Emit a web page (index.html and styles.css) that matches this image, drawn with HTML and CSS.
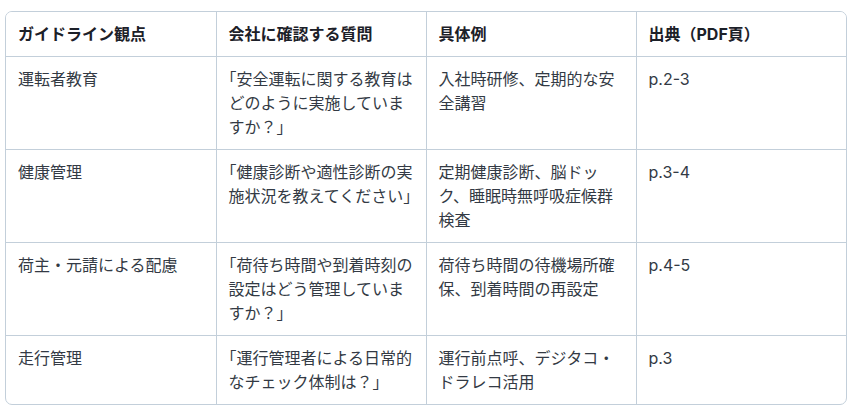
FILE: index.html
```html
<!DOCTYPE html>
<html lang="ja">
<head>
<meta charset="utf-8">
<link rel="stylesheet" href="styles.css">
</head>
<body>
<div class="wrap">
<table class="tbl">
<thead>
<tr><th>ガイドライン観点</th><th>会社に確認する質問</th><th>具体例</th><th>出典（PDF頁）</th></tr>
</thead>
<tbody>
<tr><td>運転者教育</td><td class="q">「安全運転に関する教育はどのように実施していますか？」</td><td>入社時研修、定期的な安全講習</td><td>p.2-3</td></tr>
<tr><td>健康管理</td><td class="q">「健康診断や適性診断の実施状況を教えてください」</td><td>定期健康診断、脳ドッ<br>ク、睡眠時無呼吸症候群検査</td><td>p.3-4</td></tr>
<tr><td>荷主・元請による配慮</td><td class="q">「荷待ち時間や到着時刻の設定はどう管理していますか？」</td><td>荷待ち時間の待機場所確保、到着時間の再設定</td><td>p.4-5</td></tr>
<tr><td>走行管理</td><td class="q">「運行管理者による日常的なチェック体制は？」</td><td>運行前点呼、デジタコ・ドラレコ活用</td><td>p.3</td></tr>
</tbody>
</table>
</div>
</body>
</html>
```
FILE: styles.css
```css
html, body {
  margin: 0;
  padding: 0;
  background: #ffffff;
}
body {
  font-family: "Inter", "Noto Sans CJK JP", sans-serif;
  font-size: 16px;
  line-height: 24px;
  color: #333a44;
}
.wrap {
  margin: 11px 0 0 5px;
  width: 840px;
  border: 1px solid #c3cfda;
  border-radius: 7px;
  overflow: hidden;
}
.tbl {
  width: 100%;
  border-collapse: collapse;
  table-layout: fixed;
}
.tbl th, .tbl td {
  padding: 10px 12px;
  text-align: left;
  vertical-align: top;
  border-right: 1px solid #c3cfda;
  border-bottom: 1px solid #c3cfda;
}
.tbl th:last-child, .tbl td:last-child {
  border-right: none;
}
.tbl tbody tr:last-child td {
  border-bottom: none;
}
.tbl th {
  font-weight: 700;
  color: #1c2028;
  background: #ffffff;
}
.q {
  text-spacing-trim: trim-start;
}
```
